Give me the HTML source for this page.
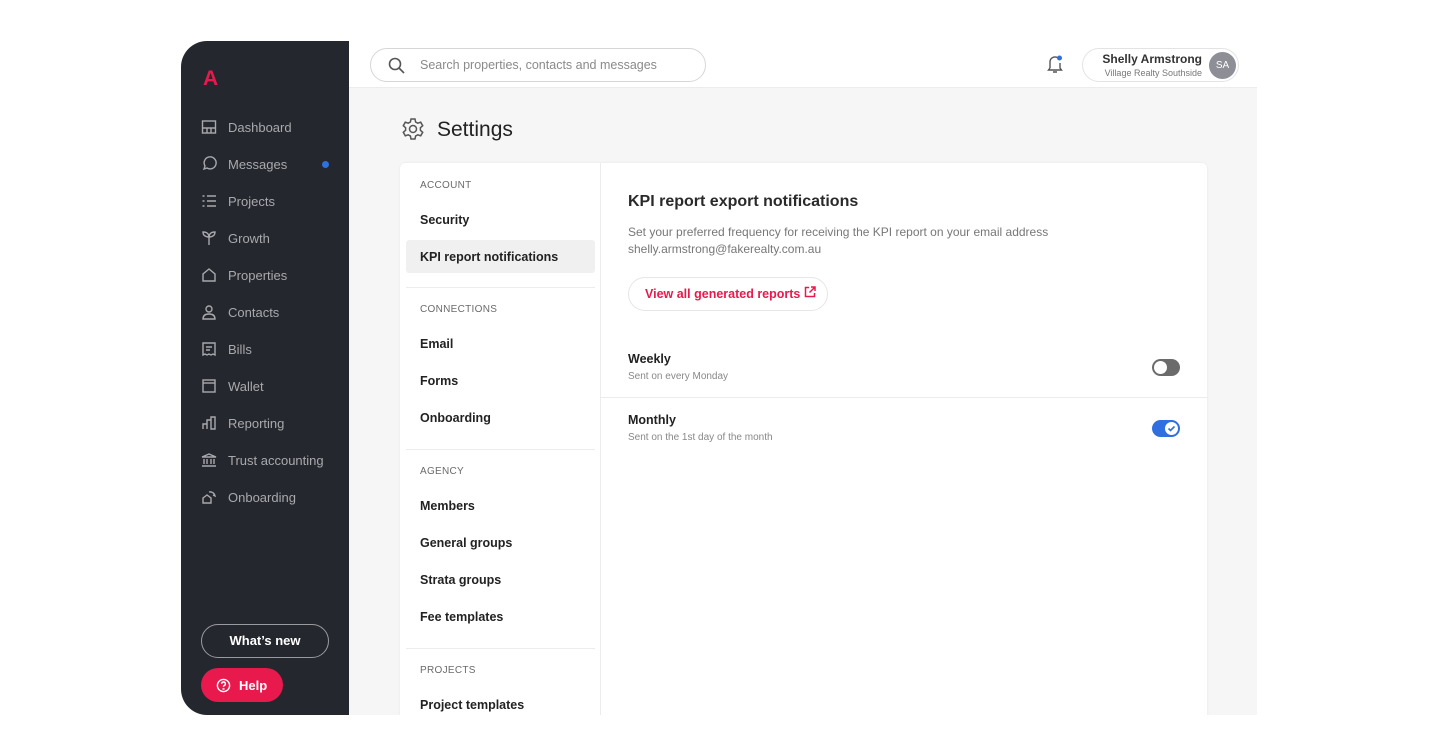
<!DOCTYPE html>
<html><head><meta charset="utf-8"><style>
*{box-sizing:border-box;margin:0;padding:0}
body{width:1440px;height:754px;background:#fff;font-family:"Liberation Sans",sans-serif;position:relative;overflow:hidden}
.app{position:absolute;left:181px;top:41px;width:1076px;height:674px;background:#f6f6f6;border-radius:26px 0 0 26px;overflow:hidden}
.side{position:absolute;left:0;top:0;width:168px;height:674px;background:#25272e}
.logo{position:absolute;left:22px;top:26px;color:#e8194d;font-weight:bold;font-size:21px}
.nav{position:absolute;left:20px;color:#a8a9ad;font-size:13px;display:flex;align-items:center}
.nav svg{width:16px;height:16px;margin-right:11px;stroke:#a8a9ad;fill:none;stroke-width:1.4}
.dot{position:absolute;left:141px;top:120px;width:7px;height:7px;border-radius:50%;background:#2f6fe0}
.wn{position:absolute;left:20px;top:583px;width:128px;height:34px;border:1.5px solid #9a9ba0;border-radius:17px;color:#fff;font-size:13px;font-weight:bold;text-align:center;line-height:31px}
.help{position:absolute;left:20px;top:627px;width:82px;height:34px;border-radius:17px;background:#e8194d;color:#fff;font-size:13px;font-weight:bold;display:flex;align-items:center;padding-left:15px}
.header{position:absolute;left:168px;top:0;width:908px;height:47px;background:#fff;border-bottom:1px solid #ececec}
.search{position:absolute;left:21px;top:7px;width:336px;height:34px;border:1px solid #d6d6d6;border-radius:17px;font-size:12.5px;color:#8a8a8a;line-height:32px;padding-left:49px}
.user{position:absolute;left:733px;top:7px;width:157px;height:34px;border:1px solid #e3e3e3;border-radius:17px}
.av{position:absolute;right:2px;top:3px;width:27px;height:27px;border-radius:50%;background:#8e8f96;color:#fff;font-size:10px;text-align:center;line-height:27px}
.card{position:absolute;left:219px;top:122px;width:807px;height:560px;background:#fff;border-radius:5px;box-shadow:0 0 2px rgba(0,0,0,.08)}
.lp{position:absolute;left:0;top:0;width:201px;height:560px;border-right:1px solid #ececec}
.sec{position:absolute;left:20px;font-size:10px;color:#6a6a6a;letter-spacing:.3px}
.it{position:absolute;left:20px;font-size:12.5px;color:#222;font-weight:bold}
.hr{position:absolute;left:6px;width:189px;height:1px;background:#ececec}
.t{position:absolute;color:#222}
</style></head><body>
<div class="app">
<div class="side">
<div class="logo">A</div>
<div class="nav" style="top:78px"><svg viewBox="0 0 16 16"><rect x="1.5" y="2" width="13" height="12"/><path d="M1.5 9h13M6 9v5M10 9v5"/></svg>Dashboard</div>
<div class="nav" style="top:115px"><svg viewBox="0 0 16 16"><path d="M3 13l1-3a6 6 0 1 1 2 2z"/></svg>Messages</div>
<div class="dot"></div>
<div class="nav" style="top:152px"><svg viewBox="0 0 16 16"><path d="M6 3h9M6 8h9M6 13h9M1.5 3h2M1.5 8h2M1.5 13h2"/></svg>Projects</div>
<div class="nav" style="top:189px"><svg viewBox="0 0 16 16"><path d="M8 15V7M8 7C8 4 6 2 2 2c0 3 2 5 6 5zM8 7c0-3 2-5 6-5 0 3-2 5-6 5z"/></svg>Growth</div>
<div class="nav" style="top:226px"><svg viewBox="0 0 16 16"><path d="M2 14V7l6-5 6 5v7z"/></svg>Properties</div>
<div class="nav" style="top:263px"><svg viewBox="0 0 16 16"><circle cx="8" cy="5" r="3"/><path d="M2 15c0-4 3-5 6-5s6 1 6 5z"/></svg>Contacts</div>
<div class="nav" style="top:300px"><svg viewBox="0 0 16 16"><path d="M2 2h12v12l-2-1-2 1-2-1-2 1-2-1-2 1zM5 6h6M5 9h4"/></svg>Bills</div>
<div class="nav" style="top:337px"><svg viewBox="0 0 16 16"><rect x="2" y="2" width="12" height="12"/><path d="M2 5h12"/></svg>Wallet</div>
<div class="nav" style="top:374px"><svg viewBox="0 0 16 16"><path d="M2 14V9h4v5M6 14V5h4v9M10 14V2h4v12z"/></svg>Reporting</div>
<div class="nav" style="top:411px"><svg viewBox="0 0 16 16"><path d="M1 5l7-3 7 3zM3 7v5M6 7v5M10 7v5M13 7v5M1 14h14"/></svg>Trust accounting</div>
<div class="nav" style="top:448px"><svg viewBox="0 0 16 16"><path d="M2 9l4-3 4 3v5H2zM8 3a5 5 0 0 1 6 4l-2-1"/></svg>Onboarding</div>
<div class="wn">What’s new</div>
<div class="help"><svg width="15" height="15" viewBox="0 0 16 16" fill="none" stroke="#fff" stroke-width="1.5" style="margin-right:8px"><circle cx="8" cy="8" r="6.5"/><path d="M6 6.3a2 2 0 1 1 2.5 1.9c-.4.2-.5.5-.5 1.2"/><circle cx="8" cy="11.7" r=".4"/></svg>Help</div>
</div>
<div class="header">
<div class="search"><svg style="position:absolute;left:17px;top:8px" width="17" height="17" viewBox="0 0 17 17" fill="none" stroke="#555" stroke-width="1.6"><circle cx="7" cy="7" r="5.5"/><path d="M11 11l5 5"/></svg>Search properties, contacts and messages</div>
<svg style="position:absolute;left:697px;top:13px" width="18" height="20" viewBox="0 0 18 20" fill="none" stroke="#555" stroke-width="1.4"><path d="M4 14V8a5 5 0 0 1 8-4M14 9v5l1.5 2h-13L4 14M7 18h4"/><circle cx="13.5" cy="4" r="2.5" fill="#2f6fe0" stroke="none"/></svg>
<div class="user"><div style="position:absolute;right:36px;top:3px;font-size:12px;font-weight:bold;color:#333">Shelly Armstrong</div><div style="position:absolute;right:36px;top:19px;font-size:9px;color:#777">Village Realty Southside</div><div class="av">SA</div></div>
</div>
<svg style="position:absolute;left:220px;top:76px" width="24" height="24" viewBox="0 0 24 24" fill="none" stroke="#555" stroke-width="1.5"><circle cx="12" cy="12" r="3.5"/><path d="M10 2h4l.6 3 2.2 1.2 2.9-1 2 3.5-2.3 2v2.6l2.3 2-2 3.5-2.9-1L14.6 19 14 22h-4l-.6-3-2.2-1.2-2.9 1-2-3.5 2.3-2v-2.6l-2.3-2 2-3.5 2.9 1L9.4 5z"/></svg>
<div class="t" style="left:256px;top:77px;font-size:21px">Settings</div>
<div class="card">
<div class="lp">
<div class="sec" style="top:17px">ACCOUNT</div>
<div class="it" style="top:50px">Security</div>
<div style="position:absolute;left:6px;top:77px;width:189px;height:33px;background:#f0f0f0;border-radius:3px"></div>
<div class="it" style="top:87px">KPI report notifications</div>
<div class="hr" style="top:124px"></div>
<div class="sec" style="top:141px">CONNECTIONS</div>
<div class="it" style="top:174px">Email</div>
<div class="it" style="top:211px">Forms</div>
<div class="it" style="top:248px">Onboarding</div>
<div class="hr" style="top:286px"></div>
<div class="sec" style="top:303px">AGENCY</div>
<div class="it" style="top:336px">Members</div>
<div class="it" style="top:373px">General groups</div>
<div class="it" style="top:410px">Strata groups</div>
<div class="it" style="top:447px">Fee templates</div>
<div class="hr" style="top:485px"></div>
<div class="sec" style="top:502px">PROJECTS</div>
<div class="it" style="top:535px">Project templates</div>
</div>
<div class="t" style="left:228px;top:30px;font-size:16px;font-weight:bold;color:#2a2a2a">KPI report export notifications</div>
<div class="t" style="left:228px;top:61px;font-size:12px;color:#777;line-height:17px">Set your preferred frequency for receiving the KPI report on your email address<br>shelly.armstrong@fakerealty.com.au</div>
<div style="position:absolute;left:228px;top:114px;width:200px;height:34px;border:1px solid #e6e6e6;border-radius:17px;color:#e8194d;font-size:12.5px;font-weight:bold;line-height:32px;padding-left:16px">View all generated reports <svg width="12" height="12" viewBox="0 0 12 12" fill="none" stroke="#e8194d" stroke-width="1.5"><path d="M5 1.5H1.5v9h9V7M7 1h4v4M11 1L5.5 6.5"/></svg></div>
<div class="t" style="left:228px;top:189px;font-size:12.5px;font-weight:bold">Weekly</div>
<div class="t" style="left:228px;top:208px;font-size:10px;color:#888">Sent on every Monday</div>
<div style="position:absolute;left:752px;top:196px;width:28px;height:17px;border-radius:9px;background:#6b6b6b"><div style="position:absolute;left:2px;top:2px;width:13px;height:13px;border-radius:50%;background:#fff"></div></div>
<div style="position:absolute;left:201px;top:234px;width:606px;height:1px;background:#ececec"></div>
<div class="t" style="left:228px;top:250px;font-size:12.5px;font-weight:bold">Monthly</div>
<div class="t" style="left:228px;top:269px;font-size:10px;color:#888">Sent on the 1st day of the month</div>
<div style="position:absolute;left:752px;top:257px;width:28px;height:17px;border-radius:9px;background:#2f6fe0"><div style="position:absolute;left:13px;top:2px;width:13px;height:13px;border-radius:50%;background:#fff"><svg width="13" height="13" viewBox="0 0 13 13" fill="none" stroke="#2f6fe0" stroke-width="1.6" style="position:absolute;left:0;top:0"><path d="M3.5 6.5l2 2 4-4"/></svg></div></div>
</div>
</div>
</body></html>
